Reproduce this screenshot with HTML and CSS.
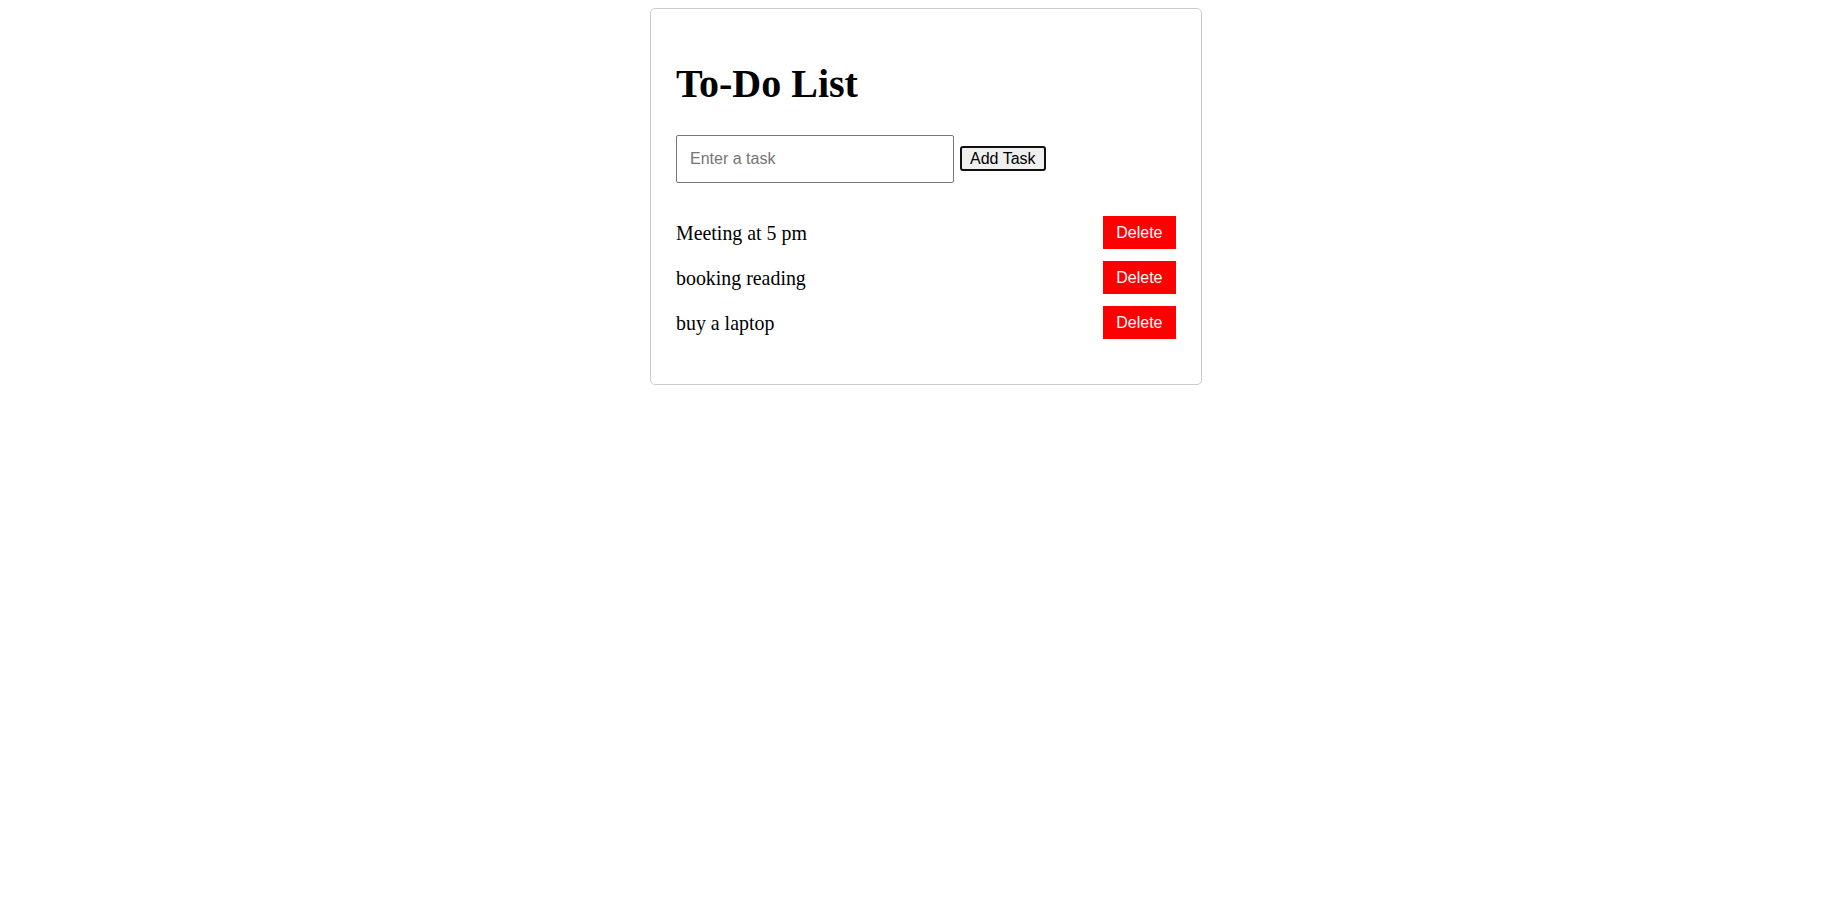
FILE: index.html
```html
<!DOCTYPE html>
<html lang="en">
<head>
<meta charset="utf-8">
<title>To-Do List</title>
<link rel="stylesheet" href="styles.css">
</head>
<body>
  <div class="card">
    <h1 class="title">To-Do List</h1>
    <div class="entry">
      <input class="task-input" type="text" placeholder="Enter a task">
      <button class="add-btn" type="button">Add Task</button>
    </div>
    <ul class="task-list">
      <li class="task"><span class="task-text">Meeting at 5 pm</span><button class="del-btn" type="button">Delete</button></li>
      <li class="task"><span class="task-text">booking reading</span><button class="del-btn" type="button">Delete</button></li>
      <li class="task"><span class="task-text">buy a laptop</span><button class="del-btn" type="button">Delete</button></li>
    </ul>
  </div>
</body>
</html>
```

FILE: styles.css
```css
html, body {
  background: #ffffff;
}

body {
  margin: 8px 0 0 7px;
  font-family: "Liberation Serif", "Times New Roman", serif;
  color: #000000;
}

.card {
  width: 500px;
  margin: 0 auto;
  padding: 24px 25px 45px 25px;
  border: 1px solid #cccccc;
  border-radius: 5px;
}

.title {
  margin: 29px 0 29px 0;
  font-family: "Liberation Serif", "Times New Roman", serif;
  font-weight: bold;
  font-size: 40px;
  line-height: 44px;
}

.entry {
  display: flex;
  align-items: center;
  gap: 6px;
  height: 48px;
}

.task-input {
  box-sizing: border-box;
  width: 278px;
  height: 48px;
  margin: 0;
  padding: 0 13px;
  border: 1px solid #767676;
  border-radius: 2px;
  font-family: "Liberation Sans", Arial, sans-serif;
  font-size: 16px;
  color: #000000;
  background: #ffffff;
  outline: none;
}

.task-input::placeholder {
  color: #757575;
}

.add-btn {
  box-sizing: border-box;
  margin: -1px 0 0 0;
  padding: 1px 8px;
  border: 2px solid #101010;
  border-radius: 3px;
  background: #efefef;
  font-family: "Liberation Sans", Arial, sans-serif;
  font-size: 16px;
  line-height: 19px;
  color: #000000;
}

.task-list {
  list-style: none;
  margin: 33px 0 0 0;
  padding: 0;
  display: flex;
  flex-direction: column;
  gap: 12px;
}

.task {
  display: flex;
  align-items: center;
  justify-content: space-between;
  height: 33px;
}

.task-text {
  font-family: "Liberation Serif", "Times New Roman", serif;
  font-size: 19.9px;
  line-height: 22px;
}

.del-btn {
  margin: 0;
  padding: 7px 13.5px;
  border: none;
  border-radius: 0;
  background: #ff0000;
  color: #ffffff;
  font-family: "Liberation Sans", Arial, sans-serif;
  font-size: 16px;
  line-height: 19px;
}
```
